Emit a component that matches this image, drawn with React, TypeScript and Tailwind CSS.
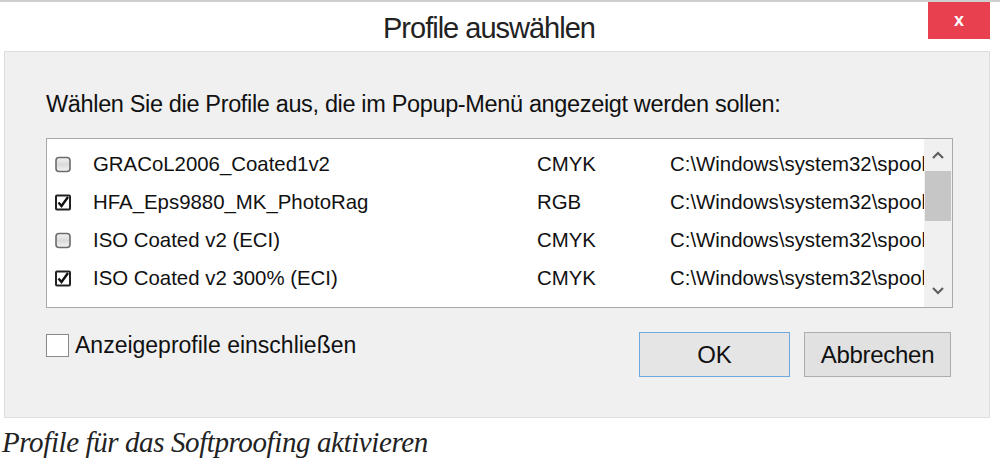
import React from "react";

const rows = [
  { name: "GRACoL2006_Coated1v2", type: "CMYK", checked: false },
  { name: "HFA_Eps9880_MK_PhotoRag", type: "RGB", checked: true },
  { name: "ISO Coated v2 (ECI)", type: "CMYK", checked: false },
  { name: "ISO Coated v2 300% (ECI)", type: "CMYK", checked: true },
];

function Box({ checked }: { checked: boolean }) {
  if (checked) {
    return (
      <svg width="16" height="17" viewBox="0 0 16 17">
        <rect x="1" y="1.5" width="14" height="14" rx="1" fill="#fff" stroke="#222" strokeWidth="2" />
        <path d="M3.5 8.5 L6.5 12 L13 3" fill="none" stroke="#111" strokeWidth="2.4" />
      </svg>
    );
  }
  return (
    <svg width="16" height="17" viewBox="0 0 16 17">
      <defs>
        <linearGradient id="g" x1="0" y1="0" x2="0" y2="1">
          <stop offset="0" stopColor="#f4f4f4" />
          <stop offset="0.5" stopColor="#d9d9d9" />
          <stop offset="1" stopColor="#f4f4f4" />
        </linearGradient>
      </defs>
      <rect x="1" y="1.5" width="14" height="14" rx="3" fill="url(#g)" stroke="#6b6b6b" strokeWidth="1.6" />
    </svg>
  );
}

export default function App() {
  return (
    <div className="w-[1000px] h-[463px] bg-white relative overflow-hidden" style={{ fontFamily: "'Liberation Sans', Arial, sans-serif" }}>
      <div className="h-[2px] bg-[#cfcfcf]" />
      <div className="h-[49px] flex items-center justify-center">
        <span className="text-[29px] text-[#222] tracking-[-1px] ml-[-22px] mt-[4px]">Profile auswählen</span>
      </div>
      <div className="absolute top-[2px] left-[928px] w-[62px] h-[37px] bg-[#e8404f] flex items-center justify-center text-white text-[18px] font-bold">
        x
      </div>
      <div className="mx-[4px] w-[986px] h-[367px] bg-[#f0f0f0] border border-[#dedede] pl-[41px] pt-[38px]">
        <div className="text-[23.5px] text-[#111] tracking-[-0.35px] leading-[28px]">
          Wählen Sie die Profile aus, die im Popup-Menü angezeigt werden sollen:
        </div>
        <div className="mt-[20px] w-[907px] h-[170px] bg-white border border-[#a9a9a9] flex">
          <div className="flex-1 pt-[6px] overflow-hidden">
            {rows.map((r) => (
              <div key={r.name} className="h-[38px] flex items-center text-[20.4px] text-[#111] whitespace-nowrap">
                <div className="w-[46px] pl-[8px] flex items-center"><Box checked={r.checked} /></div>
                <div className="w-[444px]">{r.name}</div>
                <div className="w-[133px]">{r.type}</div>
                <div className="flex-1 overflow-hidden">C:\Windows\system32\spool</div>
              </div>
            ))}
          </div>
          <div className="w-[28px] bg-[#f0f0f0] flex flex-col items-center">
            <div className="h-[32px] flex items-center justify-center">
              <svg width="14" height="10" viewBox="0 0 14 10"><path d="M2 8 L7 3 L12 8" fill="none" stroke="#606060" strokeWidth="2.2" /></svg>
            </div>
            <div className="w-[26px] h-[50px] bg-[#c6c6c6]" />
            <div className="flex-1" />
            <div className="h-[32px] flex items-center justify-center">
              <svg width="14" height="10" viewBox="0 0 14 10"><path d="M2 2 L7 7 L12 2" fill="none" stroke="#606060" strokeWidth="2.2" /></svg>
            </div>
          </div>
        </div>
        <div className="mt-[23px] flex items-start">
          <div className="flex items-center mt-[-3px]">
            <div className="w-[23px] h-[23px] bg-white border border-[#8a8a8a]" />
            <span className="ml-[6px] text-[23px] text-[#111]">Anzeigeprofile einschließen</span>
          </div>
          <div className="ml-auto mr-[38px] flex gap-[14px] mt-[1px]">
            <div className="w-[151px] h-[45px] bg-[#e5e5e5] border border-[#6fa8dc] flex items-center justify-center text-[24px] text-[#111]">OK</div>
            <div className="w-[147px] h-[45px] bg-[#e1e1e1] border border-[#adadad] flex items-center justify-center text-[24px] text-[#111] tracking-[-0.3px]">Abbrechen</div>
          </div>
        </div>
      </div>
      <div className="pl-[2px] pt-[8px] text-[29px] italic text-[#222] leading-[33px] tracking-[-0.4px]" style={{ fontFamily: "'Liberation Serif', 'Times New Roman', serif" }}>
        Profile für das Softproofing aktivieren
      </div>
    </div>
  );
}
